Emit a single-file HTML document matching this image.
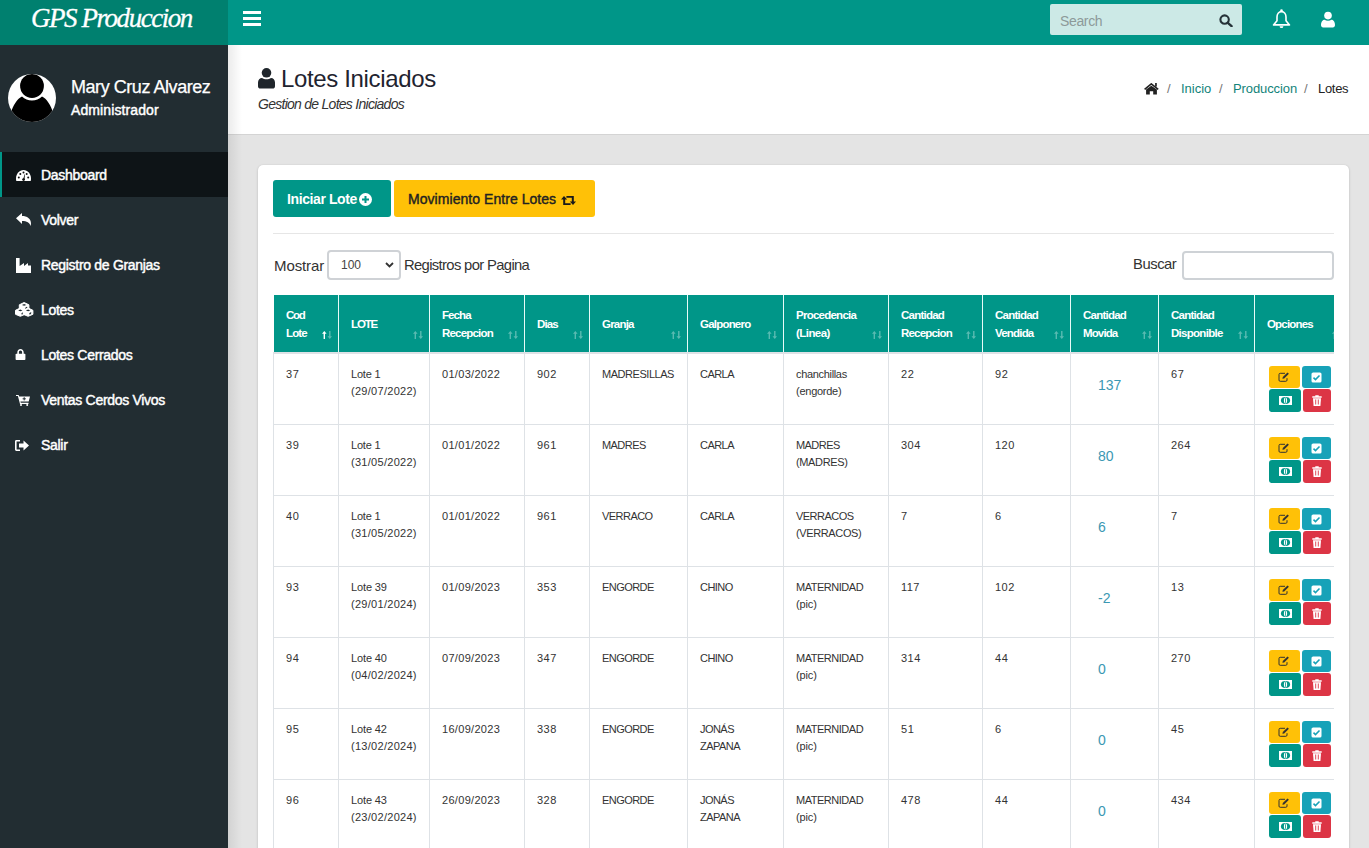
<!DOCTYPE html><html><head><meta charset="utf-8"><title>Lotes Iniciados</title><style>
*{box-sizing:border-box;margin:0;padding:0}
html,body{width:1369px;height:848px;overflow:hidden;background:#e4e4e4;font-family:"Liberation Sans",sans-serif;color:#222}
.a{position:absolute}
.nw{white-space:nowrap}
#logo{left:0;top:0;width:228px;height:45px;background:#00806f}
#nav{left:228px;top:0;width:1141px;height:45px;background:#009688}
#side{left:0;top:45px;width:228px;height:803px;background:#222d32}
#hdr{left:228px;top:45px;width:1141px;height:90px;background:#fff;border-bottom:1px solid #d4d4d4}
#card{left:258px;top:165px;width:1091px;height:720px;background:#fff;border-radius:5px;box-shadow:0 0 1px rgba(0,0,0,.125),0 1px 3px rgba(0,0,0,.15)}
.mi{color:#fff;letter-spacing:-0.3px;-webkit-text-stroke:0.45px #fff}
.th{color:#fff;font-weight:bold;letter-spacing:-0.25px}
.td{color:#333}
</style></head><body>
<div id="logo" class="a"></div>
<div class="a nw" style="left:31px;top:5.14px;font-size:27px;line-height:27px;font-family:'Liberation Serif',serif;font-style:italic;color:#fff;letter-spacing:-1.45px;-webkit-text-stroke:0.3px #fff">GPS Produccion</div>
<div id="nav" class="a"></div>
<div class="a" style="left:243px;top:11px;"><svg width="18" height="15" viewBox="0 0 18 15" style="display:block;"><rect x="0" y="0" width="18" height="3" fill="#fff"/><rect x="0" y="6" width="18" height="3" fill="#fff"/><rect x="0" y="12" width="18" height="3" fill="#fff"/></svg></div>
<div class="a" style="left:1050px;top:4px;width:192px;height:31px;background:#cce9e6;border-radius:2px"></div>
<div class="a nw" style="left:1060px;top:14.15px;font-size:14px;line-height:14px;color:#8c9a99;letter-spacing:-0.35px">Search</div>
<div class="a" style="left:1219px;top:14px;"><svg width="14" height="13" viewBox="0 0 14 13" style="display:block;"><circle cx="5.6" cy="5.6" r="4.2" fill="none" stroke="#263238" stroke-width="2.1"/><line x1="8.8" y1="8.8" x2="12.6" y2="12.2" stroke="#263238" stroke-width="2.3" stroke-linecap="round"/></svg></div>
<div class="a" style="left:1272px;top:9px;"><svg width="19" height="20" viewBox="0 0 19 20" style="display:block;"><circle cx="9.5" cy="1.6" r="1.3" fill="#fff"/><path d="M9.5 2.6c-2.7 0-4.5 2.3-4.5 5.4v3.7L1.5 15.9h16L14 11.7V8c0-3.1-1.8-5.4-4.5-5.4z" fill="none" stroke="#fff" stroke-width="1.6" stroke-linejoin="round"/><path d="M7.6 17.2a1.9 1.9 0 0 0 3.8 0z" fill="#fff"/></svg></div>
<div class="a" style="left:1321px;top:11px;"><svg width="14" height="17" viewBox="0 0 15 17" style="display:block;"><circle cx="7.5" cy="4.3" r="4.1" fill="#fff"/><path d="M0 14.5c0-4 2.2-5.8 3.8-5.8 1 .7 2.2 1.1 3.7 1.1s2.7-.4 3.7-1.1c1.6 0 3.8 1.8 3.8 5.8 0 1.5-1 2.5-2.3 2.5H2.3C1 17 0 16 0 14.5z" fill="#fff"/></svg></div>
<div id="side" class="a"></div>
<div class="a" style="left:8px;top:74px;"><svg width="48" height="48" viewBox="0 0 48 48" style="display:block;"><defs><clipPath id="cc"><circle cx="24" cy="24" r="24"/></clipPath></defs><circle cx="24" cy="24" r="24" fill="#fff"/><g clip-path="url(#cc)"><circle cx="24" cy="12" r="11.9" fill="#000"/><path d="M14 22.5C9.5 24.5 5 31 2.5 40L0 49H48L45.5 40C43 31 38.5 24.5 34 22.5A14.5 14.5 0 0 1 14 22.5Z" fill="#000"/></g></svg></div>
<div class="a nw" style="left:71px;top:78.06px;font-size:18px;line-height:18px;color:#fff;letter-spacing:-0.45px;-webkit-text-stroke:0.25px #fff">Mary Cruz Alvarez</div>
<div class="a nw" style="left:71px;top:103.35px;font-size:14px;line-height:14px;color:#fff;letter-spacing:0.1px;-webkit-text-stroke:0.45px #fff">Administrador</div>
<div class="a" style="left:0;top:152px;width:228px;height:45px;background:#0e1417"></div>
<div class="a" style="left:0;top:152px;width:2px;height:45px;background:#009688"></div>
<div class="a" style="left:16px;top:170px;"><svg width="15" height="11" viewBox="0 0 15 11" style="display:block;"><path d="M0.3 11C0.1 10.2 0 9.3 0 8.4 0 3.8 3.4 0 7.5 0S15 3.8 15 8.4c0 .9-.1 1.8-.3 2.6z" fill="#fff"/><circle cx="2.8" cy="7.6" r="1" fill="#111"/><circle cx="4.3" cy="3.9" r="1" fill="#111"/><circle cx="7.5" cy="2.4" r="1" fill="#111"/><circle cx="12.2" cy="7.6" r="1" fill="#111"/><circle cx="10.7" cy="3.9" r="1" fill="#111"/><path d="M7 9.8L8.6 4.2 9 4.3 8.4 9.9z" fill="#111"/><circle cx="7.6" cy="9.6" r="1.4" fill="#111"/></svg></div>
<div class="a nw mi" style="left:41px;top:168.45px;font-size:14px;line-height:14px">Dashboard</div>
<div class="a" style="left:16px;top:213px;"><svg width="15" height="13" viewBox="0 0 15 13" style="display:block;"><path d="M0 5.2L6 0v3C11 3 15 5.5 15 10.5c0 1-.3 1.8-.6 2.5-.6-3.2-3.6-5-8.4-5V11z" fill="#fff"/></svg></div>
<div class="a nw mi" style="left:41px;top:213.45px;font-size:14px;line-height:14px">Volver</div>
<div class="a" style="left:16px;top:258px;"><svg width="15" height="15" viewBox="0 0 15 15" style="display:block;"><path d="M0 15V0h3.6v8L8 5v3l4-3v2.5h3V15z" fill="#fff"/></svg></div>
<div class="a nw mi" style="left:41px;top:258.45px;font-size:14px;line-height:14px">Registro de Granjas</div>
<div class="a" style="left:15px;top:302px;"><svg width="19" height="15" viewBox="0 0 19 15" style="display:block;"><path d="M4.3 2.8L9.1 0.5L13.899999999999999 2.8V6.8L9.1 8.8L4.3 6.8Z" fill="#fff" stroke="#fff" stroke-width="1" stroke-linejoin="round"/><path d="M6.9 2.9L9.1 2.1L11.3 2.9L9.1 3.7Z" fill="#222d32"/><ellipse cx="11.3" cy="5.9" rx="1.3" ry="0.7" transform="rotate(-40 11.3 5.9)" fill="#222d32"/><path d="M0.5 8.3L5.3 6L10.1 8.3V12.3L5.3 14.3L0.5 12.3Z" fill="#fff" stroke="#fff" stroke-width="1" stroke-linejoin="round"/><path d="M3.1 8.4L5.3 7.6L7.5 8.4L5.3 9.2Z" fill="#222d32"/><ellipse cx="7.5" cy="11.4" rx="1.3" ry="0.7" transform="rotate(-40 7.5 11.4)" fill="#222d32"/><path d="M8.3 8.3L13.100000000000001 6L17.9 8.3V12.3L13.100000000000001 14.3L8.3 12.3Z" fill="#fff" stroke="#fff" stroke-width="1" stroke-linejoin="round"/><path d="M10.9 8.4L13.100000000000001 7.6L15.3 8.4L13.100000000000001 9.2Z" fill="#222d32"/><ellipse cx="15.3" cy="11.4" rx="1.3" ry="0.7" transform="rotate(-40 15.3 11.4)" fill="#222d32"/></svg></div>
<div class="a nw mi" style="left:41px;top:303.45px;font-size:14px;line-height:14px">Lotes</div>
<div class="a" style="left:15px;top:349px;"><svg width="11" height="11" viewBox="0 0 11 11" style="display:block;"><path d="M2.3 5V3.4C2.3 1.5 3.7 0 5.5 0s3.2 1.5 3.2 3.4V5H7.1V3.4c0-1-.7-1.8-1.6-1.8s-1.6.8-1.6 1.8V5z" fill="#fff"/><rect x="0.6" y="4.8" width="9.8" height="6.2" rx="0.8" fill="#fff"/></svg></div>
<div class="a nw mi" style="left:41px;top:348.45px;font-size:14px;line-height:14px">Lotes Cerrados</div>
<div class="a" style="left:16px;top:395px;"><svg width="14" height="11" viewBox="0 0 14 11" style="display:block;"><path d="M0 0h2.6l.6 1.6H14l-1.3 5H4.4l.4 1.2h7.7v1.1H4L1.9 1.1H0z" fill="#fff"/><circle cx="5" cy="10" r="1" fill="#fff"/><circle cx="11.2" cy="10" r="1" fill="#fff"/><path d="M8.2 2.2v3.2M6.6 3.8h3.2" stroke="#222d32" stroke-width="1"/></svg></div>
<div class="a nw mi" style="left:41px;top:393.45px;font-size:14px;line-height:14px">Ventas Cerdos Vivos</div>
<div class="a" style="left:15px;top:440px;"><svg width="14" height="11" viewBox="0 0 14 11" style="display:block;"><path d="M5 0H1.4C.6 0 0 .6 0 1.4v8.2C0 10.4.6 11 1.4 11H5V9.5H1.6v-8H5z" fill="#fff"/><path d="M4 3.6h4.5V0.6L14 5.5l-5.5 4.9V7.4H4z" fill="#fff"/></svg></div>
<div class="a nw mi" style="left:41px;top:438.45px;font-size:14px;line-height:14px">Salir</div>
<div id="hdr" class="a"></div>
<div class="a" style="left:228px;top:45px;width:14px;height:803px;background:linear-gradient(90deg,rgba(0,0,0,.08),rgba(0,0,0,0))"></div>
<div class="a" style="left:258px;top:68px;"><svg width="17" height="21" viewBox="0 0 17 21" style="display:block;"><circle cx="8.5" cy="4.8" r="4.8" fill="#1f252b"/><path d="M0 14.6C0 11.6 1.8 9.9 4 9.9c1.2.8 2.8 1.3 4.5 1.3s3.3-.5 4.5-1.3c2.2 0 4 1.7 4 4.7v3.6c0 1.4-1 2.4-2.4 2.4H2.4C1 20.6 0 19.6 0 18.2z" fill="#1f252b"/></svg></div>
<div class="a nw" style="left:281px;top:66.98px;font-size:24px;line-height:24px;color:#1f2430;letter-spacing:-0.35px">Lotes Iniciados</div>
<div class="a nw" style="left:258px;top:97.45px;font-size:14px;line-height:14px;letter-spacing:-0.732px;color:#333;font-style:italic">Gestion de Lotes Iniciados</div>
<div class="a" style="left:1144px;top:83px;"><svg width="15" height="12" viewBox="0 0 15 12" style="display:block;"><path d="M0.6 6.3L7.3 0.9l6.9 5.4" fill="none" stroke="#222" stroke-width="1.6"/><rect x="11.1" y="0" width="1.7" height="3.6" fill="#222"/><path d="M2.1 6.6L7.3 2.7l5.6 3.9V11.6H9.2V8.3H5.8V11.6H2.1Z" fill="#222"/></svg></div>
<div class="a nw" style="left:1167px;top:81.70px;font-size:13px;line-height:13px;color:#777">/</div>
<div class="a nw" style="left:1181px;top:81.70px;font-size:13px;line-height:13px;color:#13837a">Inicio</div>
<div class="a nw" style="left:1219px;top:81.70px;font-size:13px;line-height:13px;color:#777">/</div>
<div class="a nw" style="left:1233px;top:81.70px;font-size:13px;line-height:13px;color:#13837a;letter-spacing:-0.1px">Produccion</div>
<div class="a nw" style="left:1304px;top:81.70px;font-size:13px;line-height:13px;color:#777">/</div>
<div class="a nw" style="left:1318px;top:81.70px;font-size:13px;line-height:13px;color:#222;letter-spacing:-0.3px">Lotes</div>
<div id="card" class="a"></div>
<div class="a" style="left:273px;top:180px;width:118px;height:37px;background:#009688;border-radius:3px"></div>
<div class="a nw" style="left:287px;top:192.15px;font-size:14px;line-height:14px;color:#fff;font-weight:bold;letter-spacing:-0.4px">Iniciar Lote</div>
<div class="a" style="left:359px;top:193px;"><svg width="13" height="13" viewBox="0 0 13 13" style="display:block;"><circle cx="6.5" cy="6.5" r="6.5" fill="#fff"/><path d="M6.5 3v7M3 6.5h7" stroke="#009688" stroke-width="2"/></svg></div>
<div class="a" style="left:394px;top:180px;width:201px;height:37px;background:#ffc107;border-radius:3px"></div>
<div class="a nw" style="left:408px;top:192.15px;font-size:14px;line-height:14px;color:#222;letter-spacing:0.05px;-webkit-text-stroke:0.4px #222">Movimiento Entre Lotes</div>
<div class="a" style="left:561px;top:196px;"><svg width="15" height="9" viewBox="0 0 15 9" style="display:block;"><path d="M3 0L6.2 3.6H4.2V7.3H9.6L9.6 9H2.2V3.6H0z" fill="#1a1a1a"/><path d="M12 9L8.8 5.4H10.8V1.7H5.4L5.4 0H12.8V5.4H15z" fill="#1a1a1a"/></svg></div>
<div class="a" style="left:273px;top:233px;width:1061px;height:1px;background:#e6e6e6"></div>
<div class="a nw" style="left:274px;top:257.50px;font-size:15px;line-height:15px;color:#333;letter-spacing:-0.1px">Mostrar</div>
<div class="a" style="left:327px;top:250px;width:74px;height:30px;border:2px solid #cfd2d6;border-radius:4px;background:#fff"></div>
<div class="a nw" style="left:341px;top:259.14px;font-size:12px;line-height:12px;color:#444">100</div>
<div class="a" style="left:385px;top:262px;"><svg width="9" height="6" viewBox="0 0 9 6" style="display:block;"><path d="M1 1l3.5 3.5L8 1" stroke="#333" stroke-width="1.8" fill="none"/></svg></div>
<div class="a nw" style="left:404px;top:257.67px;font-size:14.8px;line-height:14.8px;color:#333;letter-spacing:-0.65px">Registros por Pagina</div>
<div class="a nw" style="left:1133px;top:257.07px;font-size:14.8px;line-height:14.8px;color:#333;letter-spacing:-0.45px">Buscar</div>
<div class="a" style="left:1182px;top:251px;width:152px;height:29px;border:2px solid #ced2d6;border-radius:4px;background:#fff"></div>
<div class="a" style="left:273px;top:295px;width:1061px;height:553px;overflow:hidden">
<div class="a" style="left:1px;top:0px;width:1075px;height:57px;background:#009688"></div>
<div class="a" style="left:65px;top:0px;width:1px;height:57px;background:#e8fbf8"></div>
<div class="a" style="left:156px;top:0px;width:1px;height:57px;background:#e8fbf8"></div>
<div class="a" style="left:251px;top:0px;width:1px;height:57px;background:#e8fbf8"></div>
<div class="a" style="left:316px;top:0px;width:1px;height:57px;background:#e8fbf8"></div>
<div class="a" style="left:414px;top:0px;width:1px;height:57px;background:#e8fbf8"></div>
<div class="a" style="left:510px;top:0px;width:1px;height:57px;background:#e8fbf8"></div>
<div class="a" style="left:615px;top:0px;width:1px;height:57px;background:#e8fbf8"></div>
<div class="a" style="left:709px;top:0px;width:1px;height:57px;background:#e8fbf8"></div>
<div class="a" style="left:797px;top:0px;width:1px;height:57px;background:#e8fbf8"></div>
<div class="a" style="left:885px;top:0px;width:1px;height:57px;background:#e8fbf8"></div>
<div class="a" style="left:981px;top:0px;width:1px;height:57px;background:#e8fbf8"></div>
<div class="a" style="left:0px;top:57px;width:1075px;height:2px;background:#dee2e6"></div>
<div class="a nw th" style="left:13px;top:15.07px;font-size:11.5px;line-height:11.5px;letter-spacing:-1.230px">Cod</div>
<div class="a nw th" style="left:13px;top:32.97px;font-size:11.5px;line-height:11.5px;letter-spacing:-0.890px">Lote</div>
<div class="a" style="left:49px;top:36px;"><svg width="10" height="8" viewBox="0 0 10 8" style="display:block;"><path d="M2.3 0L4.6 2.8H3v5.2H1.6V2.8H0z" fill="#fff"/><path d="M7.8 8L10 5.2H8.5V0H7.1v5.2H5.5z" fill="rgba(255,255,255,.35)"/></svg></div>
<div class="a nw th" style="left:78px;top:23.57px;font-size:11.5px;line-height:11.5px;letter-spacing:-1.124px">LOTE</div>
<div class="a" style="left:140px;top:36px;"><svg width="10" height="8" viewBox="0 0 10 8" style="display:block;"><path d="M2.3 0L4.6 2.8H3v5.2H1.6V2.8H0z" fill="rgba(255,255,255,.35)"/><path d="M7.8 8L10 5.2H8.5V0H7.1v5.2H5.5z" fill="rgba(255,255,255,.35)"/></svg></div>
<div class="a nw th" style="left:169px;top:15.07px;font-size:11.5px;line-height:11.5px;letter-spacing:-0.914px">Fecha</div>
<div class="a nw th" style="left:169px;top:32.97px;font-size:11.5px;line-height:11.5px;letter-spacing:-0.800px">Recepcion</div>
<div class="a" style="left:235px;top:36px;"><svg width="10" height="8" viewBox="0 0 10 8" style="display:block;"><path d="M2.3 0L4.6 2.8H3v5.2H1.6V2.8H0z" fill="rgba(255,255,255,.35)"/><path d="M7.8 8L10 5.2H8.5V0H7.1v5.2H5.5z" fill="rgba(255,255,255,.35)"/></svg></div>
<div class="a nw th" style="left:264px;top:23.57px;font-size:11.5px;line-height:11.5px;letter-spacing:-0.891px">Dias</div>
<div class="a" style="left:300px;top:36px;"><svg width="10" height="8" viewBox="0 0 10 8" style="display:block;"><path d="M2.3 0L4.6 2.8H3v5.2H1.6V2.8H0z" fill="rgba(255,255,255,.35)"/><path d="M7.8 8L10 5.2H8.5V0H7.1v5.2H5.5z" fill="rgba(255,255,255,.35)"/></svg></div>
<div class="a nw th" style="left:329px;top:23.57px;font-size:11.5px;line-height:11.5px;letter-spacing:-0.801px">Granja</div>
<div class="a" style="left:398px;top:36px;"><svg width="10" height="8" viewBox="0 0 10 8" style="display:block;"><path d="M2.3 0L4.6 2.8H3v5.2H1.6V2.8H0z" fill="rgba(255,255,255,.35)"/><path d="M7.8 8L10 5.2H8.5V0H7.1v5.2H5.5z" fill="rgba(255,255,255,.35)"/></svg></div>
<div class="a nw th" style="left:427px;top:23.57px;font-size:11.5px;line-height:11.5px;letter-spacing:-0.791px">Galponero</div>
<div class="a" style="left:494px;top:36px;"><svg width="10" height="8" viewBox="0 0 10 8" style="display:block;"><path d="M2.3 0L4.6 2.8H3v5.2H1.6V2.8H0z" fill="rgba(255,255,255,.35)"/><path d="M7.8 8L10 5.2H8.5V0H7.1v5.2H5.5z" fill="rgba(255,255,255,.35)"/></svg></div>
<div class="a nw th" style="left:523px;top:15.07px;font-size:11.5px;line-height:11.5px;letter-spacing:-0.752px">Procedencia</div>
<div class="a nw th" style="left:523px;top:32.97px;font-size:11.5px;line-height:11.5px;letter-spacing:-0.551px">(Linea)</div>
<div class="a" style="left:599px;top:36px;"><svg width="10" height="8" viewBox="0 0 10 8" style="display:block;"><path d="M2.3 0L4.6 2.8H3v5.2H1.6V2.8H0z" fill="rgba(255,255,255,.35)"/><path d="M7.8 8L10 5.2H8.5V0H7.1v5.2H5.5z" fill="rgba(255,255,255,.35)"/></svg></div>
<div class="a nw th" style="left:628px;top:15.07px;font-size:11.5px;line-height:11.5px;letter-spacing:-0.773px">Cantidad</div>
<div class="a nw th" style="left:628px;top:32.97px;font-size:11.5px;line-height:11.5px;letter-spacing:-0.800px">Recepcion</div>
<div class="a" style="left:693px;top:36px;"><svg width="10" height="8" viewBox="0 0 10 8" style="display:block;"><path d="M2.3 0L4.6 2.8H3v5.2H1.6V2.8H0z" fill="rgba(255,255,255,.35)"/><path d="M7.8 8L10 5.2H8.5V0H7.1v5.2H5.5z" fill="rgba(255,255,255,.35)"/></svg></div>
<div class="a nw th" style="left:722px;top:15.07px;font-size:11.5px;line-height:11.5px;letter-spacing:-0.773px">Cantidad</div>
<div class="a nw th" style="left:722px;top:32.97px;font-size:11.5px;line-height:11.5px;letter-spacing:-0.808px">Vendida</div>
<div class="a" style="left:781px;top:36px;"><svg width="10" height="8" viewBox="0 0 10 8" style="display:block;"><path d="M2.3 0L4.6 2.8H3v5.2H1.6V2.8H0z" fill="rgba(255,255,255,.35)"/><path d="M7.8 8L10 5.2H8.5V0H7.1v5.2H5.5z" fill="rgba(255,255,255,.35)"/></svg></div>
<div class="a nw th" style="left:810px;top:15.07px;font-size:11.5px;line-height:11.5px;letter-spacing:-0.773px">Cantidad</div>
<div class="a nw th" style="left:810px;top:32.97px;font-size:11.5px;line-height:11.5px;letter-spacing:-0.872px">Movida</div>
<div class="a" style="left:869px;top:36px;"><svg width="10" height="8" viewBox="0 0 10 8" style="display:block;"><path d="M2.3 0L4.6 2.8H3v5.2H1.6V2.8H0z" fill="rgba(255,255,255,.35)"/><path d="M7.8 8L10 5.2H8.5V0H7.1v5.2H5.5z" fill="rgba(255,255,255,.35)"/></svg></div>
<div class="a nw th" style="left:898px;top:15.07px;font-size:11.5px;line-height:11.5px;letter-spacing:-0.773px">Cantidad</div>
<div class="a nw th" style="left:898px;top:32.97px;font-size:11.5px;line-height:11.5px;letter-spacing:-0.718px">Disponible</div>
<div class="a" style="left:965px;top:36px;"><svg width="10" height="8" viewBox="0 0 10 8" style="display:block;"><path d="M2.3 0L4.6 2.8H3v5.2H1.6V2.8H0z" fill="rgba(255,255,255,.35)"/><path d="M7.8 8L10 5.2H8.5V0H7.1v5.2H5.5z" fill="rgba(255,255,255,.35)"/></svg></div>
<div class="a nw th" style="left:994px;top:23.57px;font-size:11.5px;line-height:11.5px;letter-spacing:-0.823px">Opciones</div>
<div class="a" style="left:1059px;top:36px;"><svg width="10" height="8" viewBox="0 0 10 8" style="display:block;"><path d="M2.3 0L4.6 2.8H3v5.2H1.6V2.8H0z" fill="rgba(255,255,255,.35)"/><path d="M7.8 8L10 5.2H8.5V0H7.1v5.2H5.5z" fill="rgba(255,255,255,.35)"/></svg></div>
<div class="a" style="left:0px;top:129px;width:1075px;height:1px;background:#dee2e6"></div>
<div class="a" style="left:0px;top:59px;width:1px;height:70px;background:#dee2e6"></div>
<div class="a" style="left:65px;top:59px;width:1px;height:70px;background:#dee2e6"></div>
<div class="a" style="left:156px;top:59px;width:1px;height:70px;background:#dee2e6"></div>
<div class="a" style="left:251px;top:59px;width:1px;height:70px;background:#dee2e6"></div>
<div class="a" style="left:316px;top:59px;width:1px;height:70px;background:#dee2e6"></div>
<div class="a" style="left:414px;top:59px;width:1px;height:70px;background:#dee2e6"></div>
<div class="a" style="left:510px;top:59px;width:1px;height:70px;background:#dee2e6"></div>
<div class="a" style="left:615px;top:59px;width:1px;height:70px;background:#dee2e6"></div>
<div class="a" style="left:709px;top:59px;width:1px;height:70px;background:#dee2e6"></div>
<div class="a" style="left:797px;top:59px;width:1px;height:70px;background:#dee2e6"></div>
<div class="a" style="left:885px;top:59px;width:1px;height:70px;background:#dee2e6"></div>
<div class="a" style="left:981px;top:59px;width:1px;height:70px;background:#dee2e6"></div>
<div class="a" style="left:1075px;top:59px;width:1px;height:70px;background:#dee2e6"></div>
<div class="a nw td" style="left:13px;top:74.29px;font-size:11px;line-height:11px;letter-spacing:0.612px">37</div>
<div class="a nw td" style="left:78px;top:74.29px;font-size:11px;line-height:11px;letter-spacing:-0.214px">Lote 1</div>
<div class="a nw td" style="left:78px;top:90.89px;font-size:11px;line-height:11px;letter-spacing:0.284px">(29/07/2022)</div>
<div class="a nw td" style="left:169px;top:74.29px;font-size:11px;line-height:11px;letter-spacing:0.306px">01/03/2022</div>
<div class="a nw td" style="left:264px;top:74.29px;font-size:11px;line-height:11px;letter-spacing:0.459px">902</div>
<div class="a nw td" style="left:329px;top:74.29px;font-size:11px;line-height:11px;letter-spacing:-0.462px">MADRESILLAS</div>
<div class="a nw td" style="left:427px;top:74.29px;font-size:11px;line-height:11px;letter-spacing:-0.550px">CARLA</div>
<div class="a nw td" style="left:523px;top:74.29px;font-size:11px;line-height:11px;letter-spacing:-0.327px">chanchillas</div>
<div class="a nw td" style="left:523px;top:90.89px;font-size:11px;line-height:11px;letter-spacing:-0.257px">(engorde)</div>
<div class="a nw td" style="left:628px;top:74.29px;font-size:11px;line-height:11px;letter-spacing:0.612px">22</div>
<div class="a nw td" style="left:722px;top:74.29px;font-size:11px;line-height:11px;letter-spacing:0.612px">92</div>
<div class="a nw" style="left:825px;top:83.25px;font-size:14px;line-height:14px;color:#3b98b3">137</div>
<div class="a nw td" style="left:898px;top:74.29px;font-size:11px;line-height:11px;letter-spacing:0.612px">67</div>
<div class="a" style="left:996px;top:71px;width:31px;height:22px;background:#ffc107;border-radius:3px"><div class="a" style="left:9px;top:6px"><svg width="12" height="10" viewBox="0 0 12 10" style="display:block;"><path d="M7 1.3H2.2C1.4 1.3 1 1.7 1 2.5v5.6c0 .8.4 1.2 1.2 1.2h5.6c.8 0 1.2-.4 1.2-1.2V6.2" fill="none" stroke="#333" stroke-width="1"/><path d="M4.4 6.8l.4-1.8L9.5.4l1.4 1.4-4.7 4.6z" fill="#333"/></svg></div></div>
<div class="a" style="left:1029px;top:71px;width:29px;height:22px;background:#17a2b8;border-radius:3px"><div class="a" style="left:9px;top:6px"><svg width="11" height="11" viewBox="0 0 11 11" style="display:block;"><rect x="0.5" y="0.5" width="10" height="10" rx="1.6" fill="#fff"/><path d="M2.5 5.6l2 2 4-4.2" stroke="#17a2b8" stroke-width="1.5" fill="none"/></svg></div></div>
<div class="a" style="left:996px;top:94px;width:32px;height:23px;background:#009688;border-radius:3px"><div class="a" style="left:10px;top:7px"><svg width="13" height="9" viewBox="0 0 13 9" style="display:block;"><rect x="0" y="0" width="13" height="9" fill="#fff"/><ellipse cx="6.5" cy="4.5" rx="4.6" ry="3.4" fill="#009688"/><ellipse cx="6.5" cy="4.5" rx="1.6" ry="3" fill="#fff"/><rect x="6.1" y="2.2" width="0.8" height="4.6" fill="#009688"/></svg></div></div>
<div class="a" style="left:1030px;top:94px;width:28px;height:23px;background:#dc3545;border-radius:3px"><div class="a" style="left:9px;top:6px"><svg width="10" height="11" viewBox="0 0 10 11" style="display:block;"><path d="M3.3 1.3V0.3h3.4v1h3v1.4H0.3V1.3z" fill="#fff"/><path d="M1 3.2h8l-.6 7.8H1.6z" fill="#fff"/><path d="M3.7 4.5v5M6.3 4.5v5" stroke="#dc3545" stroke-width="0.9"/></svg></div></div>
<div class="a" style="left:0px;top:200px;width:1075px;height:1px;background:#dee2e6"></div>
<div class="a" style="left:0px;top:130px;width:1px;height:70px;background:#dee2e6"></div>
<div class="a" style="left:65px;top:130px;width:1px;height:70px;background:#dee2e6"></div>
<div class="a" style="left:156px;top:130px;width:1px;height:70px;background:#dee2e6"></div>
<div class="a" style="left:251px;top:130px;width:1px;height:70px;background:#dee2e6"></div>
<div class="a" style="left:316px;top:130px;width:1px;height:70px;background:#dee2e6"></div>
<div class="a" style="left:414px;top:130px;width:1px;height:70px;background:#dee2e6"></div>
<div class="a" style="left:510px;top:130px;width:1px;height:70px;background:#dee2e6"></div>
<div class="a" style="left:615px;top:130px;width:1px;height:70px;background:#dee2e6"></div>
<div class="a" style="left:709px;top:130px;width:1px;height:70px;background:#dee2e6"></div>
<div class="a" style="left:797px;top:130px;width:1px;height:70px;background:#dee2e6"></div>
<div class="a" style="left:885px;top:130px;width:1px;height:70px;background:#dee2e6"></div>
<div class="a" style="left:981px;top:130px;width:1px;height:70px;background:#dee2e6"></div>
<div class="a" style="left:1075px;top:130px;width:1px;height:70px;background:#dee2e6"></div>
<div class="a nw td" style="left:13px;top:145.29px;font-size:11px;line-height:11px;letter-spacing:0.612px">39</div>
<div class="a nw td" style="left:78px;top:145.29px;font-size:11px;line-height:11px;letter-spacing:-0.214px">Lote 1</div>
<div class="a nw td" style="left:78px;top:161.89px;font-size:11px;line-height:11px;letter-spacing:0.284px">(31/05/2022)</div>
<div class="a nw td" style="left:169px;top:145.29px;font-size:11px;line-height:11px;letter-spacing:0.306px">01/01/2022</div>
<div class="a nw td" style="left:264px;top:145.29px;font-size:11px;line-height:11px;letter-spacing:0.459px">961</div>
<div class="a nw td" style="left:329px;top:145.29px;font-size:11px;line-height:11px;letter-spacing:-0.565px">MADRES</div>
<div class="a nw td" style="left:427px;top:145.29px;font-size:11px;line-height:11px;letter-spacing:-0.550px">CARLA</div>
<div class="a nw td" style="left:523px;top:145.29px;font-size:11px;line-height:11px;letter-spacing:-0.565px">MADRES</div>
<div class="a nw td" style="left:523px;top:161.89px;font-size:11px;line-height:11px;letter-spacing:-0.351px">(MADRES)</div>
<div class="a nw td" style="left:628px;top:145.29px;font-size:11px;line-height:11px;letter-spacing:0.459px">304</div>
<div class="a nw td" style="left:722px;top:145.29px;font-size:11px;line-height:11px;letter-spacing:0.459px">120</div>
<div class="a nw" style="left:825px;top:154.25px;font-size:14px;line-height:14px;color:#3b98b3">80</div>
<div class="a nw td" style="left:898px;top:145.29px;font-size:11px;line-height:11px;letter-spacing:0.459px">264</div>
<div class="a" style="left:996px;top:142px;width:31px;height:22px;background:#ffc107;border-radius:3px"><div class="a" style="left:9px;top:6px"><svg width="12" height="10" viewBox="0 0 12 10" style="display:block;"><path d="M7 1.3H2.2C1.4 1.3 1 1.7 1 2.5v5.6c0 .8.4 1.2 1.2 1.2h5.6c.8 0 1.2-.4 1.2-1.2V6.2" fill="none" stroke="#333" stroke-width="1"/><path d="M4.4 6.8l.4-1.8L9.5.4l1.4 1.4-4.7 4.6z" fill="#333"/></svg></div></div>
<div class="a" style="left:1029px;top:142px;width:29px;height:22px;background:#17a2b8;border-radius:3px"><div class="a" style="left:9px;top:6px"><svg width="11" height="11" viewBox="0 0 11 11" style="display:block;"><rect x="0.5" y="0.5" width="10" height="10" rx="1.6" fill="#fff"/><path d="M2.5 5.6l2 2 4-4.2" stroke="#17a2b8" stroke-width="1.5" fill="none"/></svg></div></div>
<div class="a" style="left:996px;top:165px;width:32px;height:23px;background:#009688;border-radius:3px"><div class="a" style="left:10px;top:7px"><svg width="13" height="9" viewBox="0 0 13 9" style="display:block;"><rect x="0" y="0" width="13" height="9" fill="#fff"/><ellipse cx="6.5" cy="4.5" rx="4.6" ry="3.4" fill="#009688"/><ellipse cx="6.5" cy="4.5" rx="1.6" ry="3" fill="#fff"/><rect x="6.1" y="2.2" width="0.8" height="4.6" fill="#009688"/></svg></div></div>
<div class="a" style="left:1030px;top:165px;width:28px;height:23px;background:#dc3545;border-radius:3px"><div class="a" style="left:9px;top:6px"><svg width="10" height="11" viewBox="0 0 10 11" style="display:block;"><path d="M3.3 1.3V0.3h3.4v1h3v1.4H0.3V1.3z" fill="#fff"/><path d="M1 3.2h8l-.6 7.8H1.6z" fill="#fff"/><path d="M3.7 4.5v5M6.3 4.5v5" stroke="#dc3545" stroke-width="0.9"/></svg></div></div>
<div class="a" style="left:0px;top:271px;width:1075px;height:1px;background:#dee2e6"></div>
<div class="a" style="left:0px;top:201px;width:1px;height:70px;background:#dee2e6"></div>
<div class="a" style="left:65px;top:201px;width:1px;height:70px;background:#dee2e6"></div>
<div class="a" style="left:156px;top:201px;width:1px;height:70px;background:#dee2e6"></div>
<div class="a" style="left:251px;top:201px;width:1px;height:70px;background:#dee2e6"></div>
<div class="a" style="left:316px;top:201px;width:1px;height:70px;background:#dee2e6"></div>
<div class="a" style="left:414px;top:201px;width:1px;height:70px;background:#dee2e6"></div>
<div class="a" style="left:510px;top:201px;width:1px;height:70px;background:#dee2e6"></div>
<div class="a" style="left:615px;top:201px;width:1px;height:70px;background:#dee2e6"></div>
<div class="a" style="left:709px;top:201px;width:1px;height:70px;background:#dee2e6"></div>
<div class="a" style="left:797px;top:201px;width:1px;height:70px;background:#dee2e6"></div>
<div class="a" style="left:885px;top:201px;width:1px;height:70px;background:#dee2e6"></div>
<div class="a" style="left:981px;top:201px;width:1px;height:70px;background:#dee2e6"></div>
<div class="a" style="left:1075px;top:201px;width:1px;height:70px;background:#dee2e6"></div>
<div class="a nw td" style="left:13px;top:216.29px;font-size:11px;line-height:11px;letter-spacing:0.612px">40</div>
<div class="a nw td" style="left:78px;top:216.29px;font-size:11px;line-height:11px;letter-spacing:-0.214px">Lote 1</div>
<div class="a nw td" style="left:78px;top:232.89px;font-size:11px;line-height:11px;letter-spacing:0.284px">(31/05/2022)</div>
<div class="a nw td" style="left:169px;top:216.29px;font-size:11px;line-height:11px;letter-spacing:0.306px">01/01/2022</div>
<div class="a nw td" style="left:264px;top:216.29px;font-size:11px;line-height:11px;letter-spacing:0.459px">961</div>
<div class="a nw td" style="left:329px;top:216.29px;font-size:11px;line-height:11px;letter-spacing:-0.544px">VERRACO</div>
<div class="a nw td" style="left:427px;top:216.29px;font-size:11px;line-height:11px;letter-spacing:-0.550px">CARLA</div>
<div class="a nw td" style="left:523px;top:216.29px;font-size:11px;line-height:11px;letter-spacing:-0.529px">VERRACOS</div>
<div class="a nw td" style="left:523px;top:232.89px;font-size:11px;line-height:11px;letter-spacing:-0.371px">(VERRACOS)</div>
<div class="a nw td" style="left:628px;top:216.29px;font-size:11px;line-height:11px;letter-spacing:0.306px">7</div>
<div class="a nw td" style="left:722px;top:216.29px;font-size:11px;line-height:11px;letter-spacing:0.306px">6</div>
<div class="a nw" style="left:825px;top:225.25px;font-size:14px;line-height:14px;color:#3b98b3">6</div>
<div class="a nw td" style="left:898px;top:216.29px;font-size:11px;line-height:11px;letter-spacing:0.306px">7</div>
<div class="a" style="left:996px;top:213px;width:31px;height:22px;background:#ffc107;border-radius:3px"><div class="a" style="left:9px;top:6px"><svg width="12" height="10" viewBox="0 0 12 10" style="display:block;"><path d="M7 1.3H2.2C1.4 1.3 1 1.7 1 2.5v5.6c0 .8.4 1.2 1.2 1.2h5.6c.8 0 1.2-.4 1.2-1.2V6.2" fill="none" stroke="#333" stroke-width="1"/><path d="M4.4 6.8l.4-1.8L9.5.4l1.4 1.4-4.7 4.6z" fill="#333"/></svg></div></div>
<div class="a" style="left:1029px;top:213px;width:29px;height:22px;background:#17a2b8;border-radius:3px"><div class="a" style="left:9px;top:6px"><svg width="11" height="11" viewBox="0 0 11 11" style="display:block;"><rect x="0.5" y="0.5" width="10" height="10" rx="1.6" fill="#fff"/><path d="M2.5 5.6l2 2 4-4.2" stroke="#17a2b8" stroke-width="1.5" fill="none"/></svg></div></div>
<div class="a" style="left:996px;top:236px;width:32px;height:23px;background:#009688;border-radius:3px"><div class="a" style="left:10px;top:7px"><svg width="13" height="9" viewBox="0 0 13 9" style="display:block;"><rect x="0" y="0" width="13" height="9" fill="#fff"/><ellipse cx="6.5" cy="4.5" rx="4.6" ry="3.4" fill="#009688"/><ellipse cx="6.5" cy="4.5" rx="1.6" ry="3" fill="#fff"/><rect x="6.1" y="2.2" width="0.8" height="4.6" fill="#009688"/></svg></div></div>
<div class="a" style="left:1030px;top:236px;width:28px;height:23px;background:#dc3545;border-radius:3px"><div class="a" style="left:9px;top:6px"><svg width="10" height="11" viewBox="0 0 10 11" style="display:block;"><path d="M3.3 1.3V0.3h3.4v1h3v1.4H0.3V1.3z" fill="#fff"/><path d="M1 3.2h8l-.6 7.8H1.6z" fill="#fff"/><path d="M3.7 4.5v5M6.3 4.5v5" stroke="#dc3545" stroke-width="0.9"/></svg></div></div>
<div class="a" style="left:0px;top:342px;width:1075px;height:1px;background:#dee2e6"></div>
<div class="a" style="left:0px;top:272px;width:1px;height:70px;background:#dee2e6"></div>
<div class="a" style="left:65px;top:272px;width:1px;height:70px;background:#dee2e6"></div>
<div class="a" style="left:156px;top:272px;width:1px;height:70px;background:#dee2e6"></div>
<div class="a" style="left:251px;top:272px;width:1px;height:70px;background:#dee2e6"></div>
<div class="a" style="left:316px;top:272px;width:1px;height:70px;background:#dee2e6"></div>
<div class="a" style="left:414px;top:272px;width:1px;height:70px;background:#dee2e6"></div>
<div class="a" style="left:510px;top:272px;width:1px;height:70px;background:#dee2e6"></div>
<div class="a" style="left:615px;top:272px;width:1px;height:70px;background:#dee2e6"></div>
<div class="a" style="left:709px;top:272px;width:1px;height:70px;background:#dee2e6"></div>
<div class="a" style="left:797px;top:272px;width:1px;height:70px;background:#dee2e6"></div>
<div class="a" style="left:885px;top:272px;width:1px;height:70px;background:#dee2e6"></div>
<div class="a" style="left:981px;top:272px;width:1px;height:70px;background:#dee2e6"></div>
<div class="a" style="left:1075px;top:272px;width:1px;height:70px;background:#dee2e6"></div>
<div class="a nw td" style="left:13px;top:287.29px;font-size:11px;line-height:11px;letter-spacing:0.612px">93</div>
<div class="a nw td" style="left:78px;top:287.29px;font-size:11px;line-height:11px;letter-spacing:-0.127px">Lote 39</div>
<div class="a nw td" style="left:78px;top:303.89px;font-size:11px;line-height:11px;letter-spacing:0.284px">(29/01/2024)</div>
<div class="a nw td" style="left:169px;top:287.29px;font-size:11px;line-height:11px;letter-spacing:0.306px">01/09/2023</div>
<div class="a nw td" style="left:264px;top:287.29px;font-size:11px;line-height:11px;letter-spacing:0.459px">353</div>
<div class="a nw td" style="left:329px;top:287.29px;font-size:11px;line-height:11px;letter-spacing:-0.556px">ENGORDE</div>
<div class="a nw td" style="left:427px;top:287.29px;font-size:11px;line-height:11px;letter-spacing:-0.532px">CHINO</div>
<div class="a nw td" style="left:523px;top:287.29px;font-size:11px;line-height:11px;letter-spacing:-0.479px">MATERNIDAD</div>
<div class="a nw td" style="left:523px;top:303.89px;font-size:11px;line-height:11px;letter-spacing:-0.119px">(pic)</div>
<div class="a nw td" style="left:628px;top:287.29px;font-size:11px;line-height:11px;letter-spacing:0.438px">117</div>
<div class="a nw td" style="left:722px;top:287.29px;font-size:11px;line-height:11px;letter-spacing:0.459px">102</div>
<div class="a nw" style="left:825px;top:296.25px;font-size:14px;line-height:14px;color:#3b98b3">-2</div>
<div class="a nw td" style="left:898px;top:287.29px;font-size:11px;line-height:11px;letter-spacing:0.612px">13</div>
<div class="a" style="left:996px;top:284px;width:31px;height:22px;background:#ffc107;border-radius:3px"><div class="a" style="left:9px;top:6px"><svg width="12" height="10" viewBox="0 0 12 10" style="display:block;"><path d="M7 1.3H2.2C1.4 1.3 1 1.7 1 2.5v5.6c0 .8.4 1.2 1.2 1.2h5.6c.8 0 1.2-.4 1.2-1.2V6.2" fill="none" stroke="#333" stroke-width="1"/><path d="M4.4 6.8l.4-1.8L9.5.4l1.4 1.4-4.7 4.6z" fill="#333"/></svg></div></div>
<div class="a" style="left:1029px;top:284px;width:29px;height:22px;background:#17a2b8;border-radius:3px"><div class="a" style="left:9px;top:6px"><svg width="11" height="11" viewBox="0 0 11 11" style="display:block;"><rect x="0.5" y="0.5" width="10" height="10" rx="1.6" fill="#fff"/><path d="M2.5 5.6l2 2 4-4.2" stroke="#17a2b8" stroke-width="1.5" fill="none"/></svg></div></div>
<div class="a" style="left:996px;top:307px;width:32px;height:23px;background:#009688;border-radius:3px"><div class="a" style="left:10px;top:7px"><svg width="13" height="9" viewBox="0 0 13 9" style="display:block;"><rect x="0" y="0" width="13" height="9" fill="#fff"/><ellipse cx="6.5" cy="4.5" rx="4.6" ry="3.4" fill="#009688"/><ellipse cx="6.5" cy="4.5" rx="1.6" ry="3" fill="#fff"/><rect x="6.1" y="2.2" width="0.8" height="4.6" fill="#009688"/></svg></div></div>
<div class="a" style="left:1030px;top:307px;width:28px;height:23px;background:#dc3545;border-radius:3px"><div class="a" style="left:9px;top:6px"><svg width="10" height="11" viewBox="0 0 10 11" style="display:block;"><path d="M3.3 1.3V0.3h3.4v1h3v1.4H0.3V1.3z" fill="#fff"/><path d="M1 3.2h8l-.6 7.8H1.6z" fill="#fff"/><path d="M3.7 4.5v5M6.3 4.5v5" stroke="#dc3545" stroke-width="0.9"/></svg></div></div>
<div class="a" style="left:0px;top:413px;width:1075px;height:1px;background:#dee2e6"></div>
<div class="a" style="left:0px;top:343px;width:1px;height:70px;background:#dee2e6"></div>
<div class="a" style="left:65px;top:343px;width:1px;height:70px;background:#dee2e6"></div>
<div class="a" style="left:156px;top:343px;width:1px;height:70px;background:#dee2e6"></div>
<div class="a" style="left:251px;top:343px;width:1px;height:70px;background:#dee2e6"></div>
<div class="a" style="left:316px;top:343px;width:1px;height:70px;background:#dee2e6"></div>
<div class="a" style="left:414px;top:343px;width:1px;height:70px;background:#dee2e6"></div>
<div class="a" style="left:510px;top:343px;width:1px;height:70px;background:#dee2e6"></div>
<div class="a" style="left:615px;top:343px;width:1px;height:70px;background:#dee2e6"></div>
<div class="a" style="left:709px;top:343px;width:1px;height:70px;background:#dee2e6"></div>
<div class="a" style="left:797px;top:343px;width:1px;height:70px;background:#dee2e6"></div>
<div class="a" style="left:885px;top:343px;width:1px;height:70px;background:#dee2e6"></div>
<div class="a" style="left:981px;top:343px;width:1px;height:70px;background:#dee2e6"></div>
<div class="a" style="left:1075px;top:343px;width:1px;height:70px;background:#dee2e6"></div>
<div class="a nw td" style="left:13px;top:358.29px;font-size:11px;line-height:11px;letter-spacing:0.612px">94</div>
<div class="a nw td" style="left:78px;top:358.29px;font-size:11px;line-height:11px;letter-spacing:-0.127px">Lote 40</div>
<div class="a nw td" style="left:78px;top:374.89px;font-size:11px;line-height:11px;letter-spacing:0.284px">(04/02/2024)</div>
<div class="a nw td" style="left:169px;top:358.29px;font-size:11px;line-height:11px;letter-spacing:0.306px">07/09/2023</div>
<div class="a nw td" style="left:264px;top:358.29px;font-size:11px;line-height:11px;letter-spacing:0.459px">347</div>
<div class="a nw td" style="left:329px;top:358.29px;font-size:11px;line-height:11px;letter-spacing:-0.556px">ENGORDE</div>
<div class="a nw td" style="left:427px;top:358.29px;font-size:11px;line-height:11px;letter-spacing:-0.532px">CHINO</div>
<div class="a nw td" style="left:523px;top:358.29px;font-size:11px;line-height:11px;letter-spacing:-0.479px">MATERNIDAD</div>
<div class="a nw td" style="left:523px;top:374.89px;font-size:11px;line-height:11px;letter-spacing:-0.119px">(pic)</div>
<div class="a nw td" style="left:628px;top:358.29px;font-size:11px;line-height:11px;letter-spacing:0.459px">314</div>
<div class="a nw td" style="left:722px;top:358.29px;font-size:11px;line-height:11px;letter-spacing:0.612px">44</div>
<div class="a nw" style="left:825px;top:367.25px;font-size:14px;line-height:14px;color:#3b98b3">0</div>
<div class="a nw td" style="left:898px;top:358.29px;font-size:11px;line-height:11px;letter-spacing:0.459px">270</div>
<div class="a" style="left:996px;top:355px;width:31px;height:22px;background:#ffc107;border-radius:3px"><div class="a" style="left:9px;top:6px"><svg width="12" height="10" viewBox="0 0 12 10" style="display:block;"><path d="M7 1.3H2.2C1.4 1.3 1 1.7 1 2.5v5.6c0 .8.4 1.2 1.2 1.2h5.6c.8 0 1.2-.4 1.2-1.2V6.2" fill="none" stroke="#333" stroke-width="1"/><path d="M4.4 6.8l.4-1.8L9.5.4l1.4 1.4-4.7 4.6z" fill="#333"/></svg></div></div>
<div class="a" style="left:1029px;top:355px;width:29px;height:22px;background:#17a2b8;border-radius:3px"><div class="a" style="left:9px;top:6px"><svg width="11" height="11" viewBox="0 0 11 11" style="display:block;"><rect x="0.5" y="0.5" width="10" height="10" rx="1.6" fill="#fff"/><path d="M2.5 5.6l2 2 4-4.2" stroke="#17a2b8" stroke-width="1.5" fill="none"/></svg></div></div>
<div class="a" style="left:996px;top:378px;width:32px;height:23px;background:#009688;border-radius:3px"><div class="a" style="left:10px;top:7px"><svg width="13" height="9" viewBox="0 0 13 9" style="display:block;"><rect x="0" y="0" width="13" height="9" fill="#fff"/><ellipse cx="6.5" cy="4.5" rx="4.6" ry="3.4" fill="#009688"/><ellipse cx="6.5" cy="4.5" rx="1.6" ry="3" fill="#fff"/><rect x="6.1" y="2.2" width="0.8" height="4.6" fill="#009688"/></svg></div></div>
<div class="a" style="left:1030px;top:378px;width:28px;height:23px;background:#dc3545;border-radius:3px"><div class="a" style="left:9px;top:6px"><svg width="10" height="11" viewBox="0 0 10 11" style="display:block;"><path d="M3.3 1.3V0.3h3.4v1h3v1.4H0.3V1.3z" fill="#fff"/><path d="M1 3.2h8l-.6 7.8H1.6z" fill="#fff"/><path d="M3.7 4.5v5M6.3 4.5v5" stroke="#dc3545" stroke-width="0.9"/></svg></div></div>
<div class="a" style="left:0px;top:484px;width:1075px;height:1px;background:#dee2e6"></div>
<div class="a" style="left:0px;top:414px;width:1px;height:70px;background:#dee2e6"></div>
<div class="a" style="left:65px;top:414px;width:1px;height:70px;background:#dee2e6"></div>
<div class="a" style="left:156px;top:414px;width:1px;height:70px;background:#dee2e6"></div>
<div class="a" style="left:251px;top:414px;width:1px;height:70px;background:#dee2e6"></div>
<div class="a" style="left:316px;top:414px;width:1px;height:70px;background:#dee2e6"></div>
<div class="a" style="left:414px;top:414px;width:1px;height:70px;background:#dee2e6"></div>
<div class="a" style="left:510px;top:414px;width:1px;height:70px;background:#dee2e6"></div>
<div class="a" style="left:615px;top:414px;width:1px;height:70px;background:#dee2e6"></div>
<div class="a" style="left:709px;top:414px;width:1px;height:70px;background:#dee2e6"></div>
<div class="a" style="left:797px;top:414px;width:1px;height:70px;background:#dee2e6"></div>
<div class="a" style="left:885px;top:414px;width:1px;height:70px;background:#dee2e6"></div>
<div class="a" style="left:981px;top:414px;width:1px;height:70px;background:#dee2e6"></div>
<div class="a" style="left:1075px;top:414px;width:1px;height:70px;background:#dee2e6"></div>
<div class="a nw td" style="left:13px;top:429.29px;font-size:11px;line-height:11px;letter-spacing:0.612px">95</div>
<div class="a nw td" style="left:78px;top:429.29px;font-size:11px;line-height:11px;letter-spacing:-0.127px">Lote 42</div>
<div class="a nw td" style="left:78px;top:445.89px;font-size:11px;line-height:11px;letter-spacing:0.284px">(13/02/2024)</div>
<div class="a nw td" style="left:169px;top:429.29px;font-size:11px;line-height:11px;letter-spacing:0.306px">16/09/2023</div>
<div class="a nw td" style="left:264px;top:429.29px;font-size:11px;line-height:11px;letter-spacing:0.459px">338</div>
<div class="a nw td" style="left:329px;top:429.29px;font-size:11px;line-height:11px;letter-spacing:-0.556px">ENGORDE</div>
<div class="a nw td" style="left:427px;top:429.29px;font-size:11px;line-height:11px;letter-spacing:-0.550px">JONÁS</div>
<div class="a nw td" style="left:427px;top:445.89px;font-size:11px;line-height:11px;letter-spacing:-0.518px">ZAPANA</div>
<div class="a nw td" style="left:523px;top:429.29px;font-size:11px;line-height:11px;letter-spacing:-0.479px">MATERNIDAD</div>
<div class="a nw td" style="left:523px;top:445.89px;font-size:11px;line-height:11px;letter-spacing:-0.119px">(pic)</div>
<div class="a nw td" style="left:628px;top:429.29px;font-size:11px;line-height:11px;letter-spacing:0.612px">51</div>
<div class="a nw td" style="left:722px;top:429.29px;font-size:11px;line-height:11px;letter-spacing:0.306px">6</div>
<div class="a nw" style="left:825px;top:438.25px;font-size:14px;line-height:14px;color:#3b98b3">0</div>
<div class="a nw td" style="left:898px;top:429.29px;font-size:11px;line-height:11px;letter-spacing:0.612px">45</div>
<div class="a" style="left:996px;top:426px;width:31px;height:22px;background:#ffc107;border-radius:3px"><div class="a" style="left:9px;top:6px"><svg width="12" height="10" viewBox="0 0 12 10" style="display:block;"><path d="M7 1.3H2.2C1.4 1.3 1 1.7 1 2.5v5.6c0 .8.4 1.2 1.2 1.2h5.6c.8 0 1.2-.4 1.2-1.2V6.2" fill="none" stroke="#333" stroke-width="1"/><path d="M4.4 6.8l.4-1.8L9.5.4l1.4 1.4-4.7 4.6z" fill="#333"/></svg></div></div>
<div class="a" style="left:1029px;top:426px;width:29px;height:22px;background:#17a2b8;border-radius:3px"><div class="a" style="left:9px;top:6px"><svg width="11" height="11" viewBox="0 0 11 11" style="display:block;"><rect x="0.5" y="0.5" width="10" height="10" rx="1.6" fill="#fff"/><path d="M2.5 5.6l2 2 4-4.2" stroke="#17a2b8" stroke-width="1.5" fill="none"/></svg></div></div>
<div class="a" style="left:996px;top:449px;width:32px;height:23px;background:#009688;border-radius:3px"><div class="a" style="left:10px;top:7px"><svg width="13" height="9" viewBox="0 0 13 9" style="display:block;"><rect x="0" y="0" width="13" height="9" fill="#fff"/><ellipse cx="6.5" cy="4.5" rx="4.6" ry="3.4" fill="#009688"/><ellipse cx="6.5" cy="4.5" rx="1.6" ry="3" fill="#fff"/><rect x="6.1" y="2.2" width="0.8" height="4.6" fill="#009688"/></svg></div></div>
<div class="a" style="left:1030px;top:449px;width:28px;height:23px;background:#dc3545;border-radius:3px"><div class="a" style="left:9px;top:6px"><svg width="10" height="11" viewBox="0 0 10 11" style="display:block;"><path d="M3.3 1.3V0.3h3.4v1h3v1.4H0.3V1.3z" fill="#fff"/><path d="M1 3.2h8l-.6 7.8H1.6z" fill="#fff"/><path d="M3.7 4.5v5M6.3 4.5v5" stroke="#dc3545" stroke-width="0.9"/></svg></div></div>
<div class="a" style="left:0px;top:555px;width:1075px;height:1px;background:#dee2e6"></div>
<div class="a" style="left:0px;top:485px;width:1px;height:70px;background:#dee2e6"></div>
<div class="a" style="left:65px;top:485px;width:1px;height:70px;background:#dee2e6"></div>
<div class="a" style="left:156px;top:485px;width:1px;height:70px;background:#dee2e6"></div>
<div class="a" style="left:251px;top:485px;width:1px;height:70px;background:#dee2e6"></div>
<div class="a" style="left:316px;top:485px;width:1px;height:70px;background:#dee2e6"></div>
<div class="a" style="left:414px;top:485px;width:1px;height:70px;background:#dee2e6"></div>
<div class="a" style="left:510px;top:485px;width:1px;height:70px;background:#dee2e6"></div>
<div class="a" style="left:615px;top:485px;width:1px;height:70px;background:#dee2e6"></div>
<div class="a" style="left:709px;top:485px;width:1px;height:70px;background:#dee2e6"></div>
<div class="a" style="left:797px;top:485px;width:1px;height:70px;background:#dee2e6"></div>
<div class="a" style="left:885px;top:485px;width:1px;height:70px;background:#dee2e6"></div>
<div class="a" style="left:981px;top:485px;width:1px;height:70px;background:#dee2e6"></div>
<div class="a" style="left:1075px;top:485px;width:1px;height:70px;background:#dee2e6"></div>
<div class="a nw td" style="left:13px;top:500.29px;font-size:11px;line-height:11px;letter-spacing:0.612px">96</div>
<div class="a nw td" style="left:78px;top:500.29px;font-size:11px;line-height:11px;letter-spacing:-0.127px">Lote 43</div>
<div class="a nw td" style="left:78px;top:516.89px;font-size:11px;line-height:11px;letter-spacing:0.284px">(23/02/2024)</div>
<div class="a nw td" style="left:169px;top:500.29px;font-size:11px;line-height:11px;letter-spacing:0.306px">26/09/2023</div>
<div class="a nw td" style="left:264px;top:500.29px;font-size:11px;line-height:11px;letter-spacing:0.459px">328</div>
<div class="a nw td" style="left:329px;top:500.29px;font-size:11px;line-height:11px;letter-spacing:-0.556px">ENGORDE</div>
<div class="a nw td" style="left:427px;top:500.29px;font-size:11px;line-height:11px;letter-spacing:-0.550px">JONÁS</div>
<div class="a nw td" style="left:427px;top:516.89px;font-size:11px;line-height:11px;letter-spacing:-0.518px">ZAPANA</div>
<div class="a nw td" style="left:523px;top:500.29px;font-size:11px;line-height:11px;letter-spacing:-0.479px">MATERNIDAD</div>
<div class="a nw td" style="left:523px;top:516.89px;font-size:11px;line-height:11px;letter-spacing:-0.119px">(pic)</div>
<div class="a nw td" style="left:628px;top:500.29px;font-size:11px;line-height:11px;letter-spacing:0.459px">478</div>
<div class="a nw td" style="left:722px;top:500.29px;font-size:11px;line-height:11px;letter-spacing:0.612px">44</div>
<div class="a nw" style="left:825px;top:509.25px;font-size:14px;line-height:14px;color:#3b98b3">0</div>
<div class="a nw td" style="left:898px;top:500.29px;font-size:11px;line-height:11px;letter-spacing:0.459px">434</div>
<div class="a" style="left:996px;top:497px;width:31px;height:22px;background:#ffc107;border-radius:3px"><div class="a" style="left:9px;top:6px"><svg width="12" height="10" viewBox="0 0 12 10" style="display:block;"><path d="M7 1.3H2.2C1.4 1.3 1 1.7 1 2.5v5.6c0 .8.4 1.2 1.2 1.2h5.6c.8 0 1.2-.4 1.2-1.2V6.2" fill="none" stroke="#333" stroke-width="1"/><path d="M4.4 6.8l.4-1.8L9.5.4l1.4 1.4-4.7 4.6z" fill="#333"/></svg></div></div>
<div class="a" style="left:1029px;top:497px;width:29px;height:22px;background:#17a2b8;border-radius:3px"><div class="a" style="left:9px;top:6px"><svg width="11" height="11" viewBox="0 0 11 11" style="display:block;"><rect x="0.5" y="0.5" width="10" height="10" rx="1.6" fill="#fff"/><path d="M2.5 5.6l2 2 4-4.2" stroke="#17a2b8" stroke-width="1.5" fill="none"/></svg></div></div>
<div class="a" style="left:996px;top:520px;width:32px;height:23px;background:#009688;border-radius:3px"><div class="a" style="left:10px;top:7px"><svg width="13" height="9" viewBox="0 0 13 9" style="display:block;"><rect x="0" y="0" width="13" height="9" fill="#fff"/><ellipse cx="6.5" cy="4.5" rx="4.6" ry="3.4" fill="#009688"/><ellipse cx="6.5" cy="4.5" rx="1.6" ry="3" fill="#fff"/><rect x="6.1" y="2.2" width="0.8" height="4.6" fill="#009688"/></svg></div></div>
<div class="a" style="left:1030px;top:520px;width:28px;height:23px;background:#dc3545;border-radius:3px"><div class="a" style="left:9px;top:6px"><svg width="10" height="11" viewBox="0 0 10 11" style="display:block;"><path d="M3.3 1.3V0.3h3.4v1h3v1.4H0.3V1.3z" fill="#fff"/><path d="M1 3.2h8l-.6 7.8H1.6z" fill="#fff"/><path d="M3.7 4.5v5M6.3 4.5v5" stroke="#dc3545" stroke-width="0.9"/></svg></div></div>
</div>
</body></html>
